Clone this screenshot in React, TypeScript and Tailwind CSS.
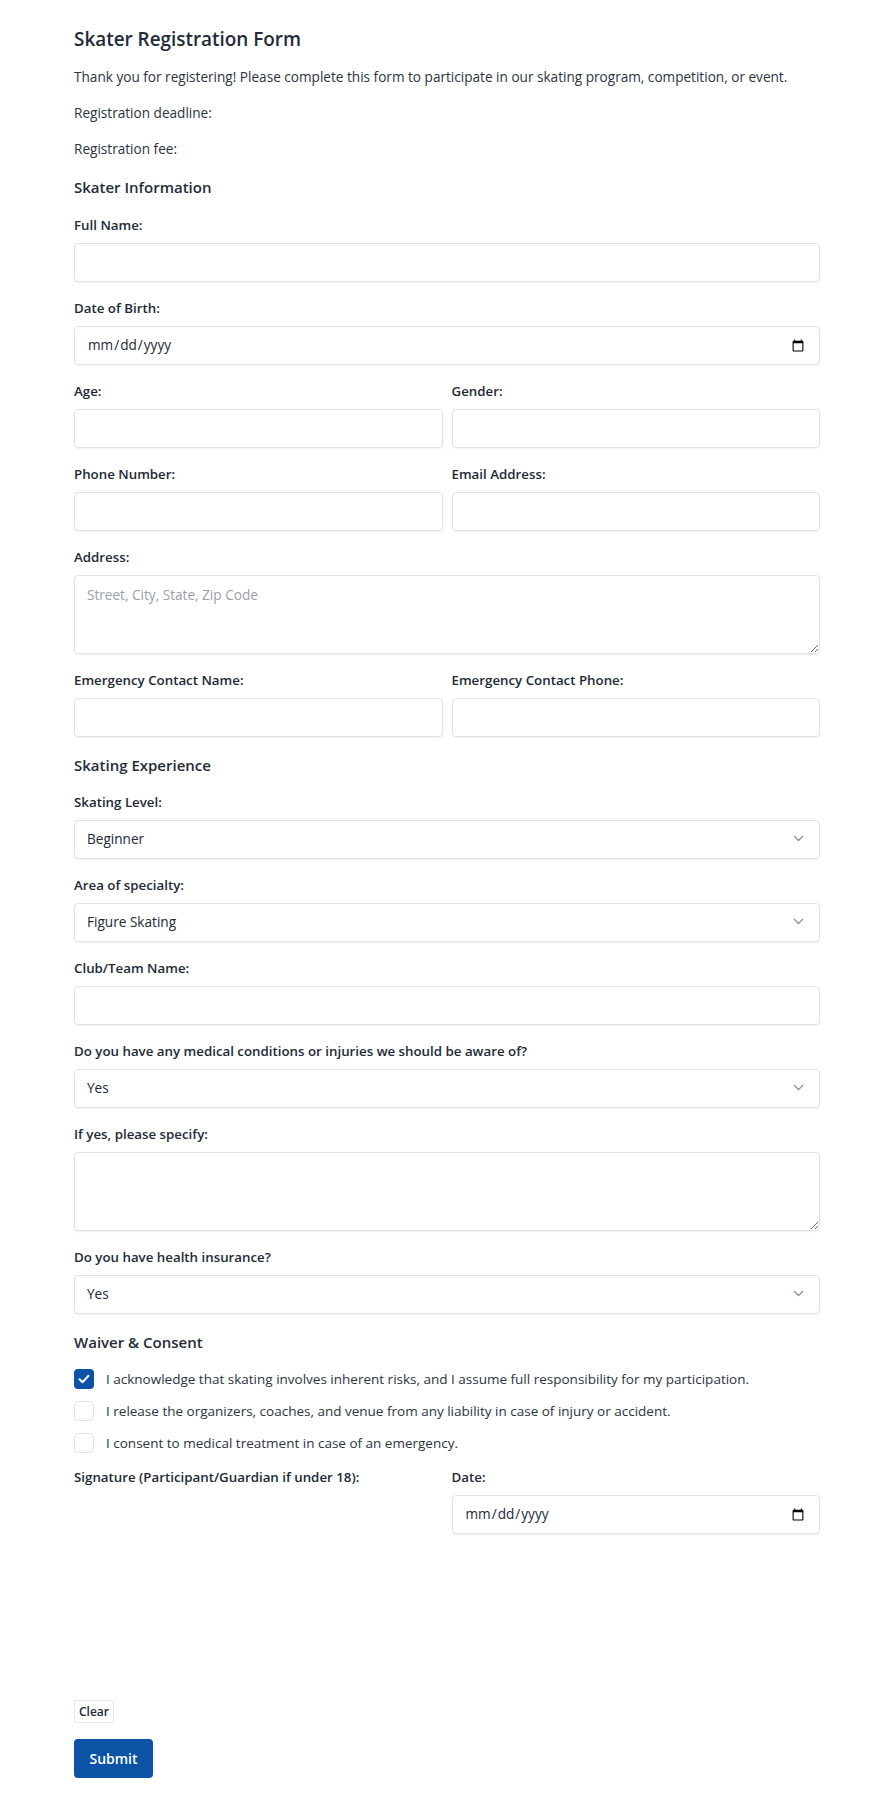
import React from 'react';

const font = { fontFamily: '"Open Sans", "Noto Sans", sans-serif' };

function Label({ children }: { children: React.ReactNode }) {
  return <label className="block text-[13.3px] leading-5 font-semibold text-[#212936] mb-2">{children}</label>;
}

const boxCls =
  'block w-full h-[39px] rounded-[4px] border border-[#dfe3e8] bg-white shadow-[0_1px_2px_rgba(0,0,0,0.06)] px-3 text-[13.6px] text-[#212936] outline-none';

function TextField({ label, type = 'text' }: { label: string; type?: string }) {
  return (
    <div className="mb-4">
      <Label>{label}</Label>
      <input type={type} className={boxCls} style={font} />
    </div>
  );
}

function SelectField({ label, value, options }: { label: string; value: string; options: string[] }) {
  return (
    <div className="mb-4">
      <Label>{label}</Label>
      <div className="relative">
        <select defaultValue={value} className={boxCls + ' appearance-none'} style={font}>
          {options.map((o) => (
            <option key={o}>{o}</option>
          ))}
        </select>
        <svg
          className="absolute right-[16px] top-[15px] pointer-events-none"
          width="11"
          height="7"
          viewBox="0 0 11 7"
          fill="none"
        >
          <path d="M1 1l4.5 4.5L10 1" stroke="#8a9099" strokeWidth="1.3" />
        </svg>
      </div>
    </div>
  );
}

function AreaField({ label, placeholder }: { label: string; placeholder?: string }) {
  return (
    <div className="mb-4">
      <Label>{label}</Label>
      <textarea
        placeholder={placeholder}
        className="block w-full h-[79px] rounded-[4px] border border-[#dfe3e8] bg-white shadow-[0_1px_2px_rgba(0,0,0,0.06)] px-3 py-[9px] text-[13.6px] text-[#212936] placeholder:text-[#9aa0a8] outline-none"
        style={font}
      />
    </div>
  );
}

function Check({ checked, children }: { checked?: boolean; children: React.ReactNode }) {
  return (
    <div className="flex items-center gap-3 h-5">
      {checked ? (
        <span className="w-5 h-5 rounded-[4px] bg-[#0c52a5] flex items-center justify-center">
          <svg width="12" height="10" viewBox="0 0 12 10" fill="none">
            <path d="M1.5 5.2l3 3L10.5 1.8" stroke="white" strokeWidth="2" strokeLinecap="round" strokeLinejoin="round" />
          </svg>
        </span>
      ) : (
        <span className="w-5 h-5 rounded-[4px] border border-[#dfe3e8] bg-white" />
      )}
      <span className="text-[13.5px] text-[#2b3340]">{children}</span>
    </div>
  );
}

export default function App() {
  return (
    <div className="bg-white min-h-[1799px] text-[#212936]" style={font}>
      <form className="ml-[74px] w-[746px] pt-[25px] pb-5" onSubmit={(e) => e.preventDefault()}>
        <h1 className="text-[18.9px] leading-7 font-semibold text-[#232b38] mb-[14px]">Skater Registration Form</h1>
        <p className="text-[13.6px] leading-5 text-[#2b3340] mb-4">
          Thank you for registering! Please complete this form to participate in our skating program, competition, or event.
        </p>
        <p className="text-[13.6px] leading-5 text-[#2b3340] mb-4">Registration deadline:</p>
        <p className="text-[13.6px] leading-5 text-[#2b3340] mb-[16px]">Registration fee:</p>

        <h2 className="text-[15px] leading-6 font-semibold text-[#232b38] mb-4">Skater Information</h2>
        <TextField label="Full Name:" />
        <TextField label="Date of Birth:" type="date" />
        <div className="grid grid-cols-2 gap-x-[9px]">
          <TextField label="Age:" />
          <TextField label="Gender:" />
          <TextField label="Phone Number:" />
          <TextField label="Email Address:" />
        </div>
        <AreaField label="Address:" placeholder="Street, City, State, Zip Code" />
        <div className="grid grid-cols-2 gap-x-[9px]">
          <TextField label="Emergency Contact Name:" />
          <TextField label="Emergency Contact Phone:" />
        </div>

        <h2 className="text-[15px] leading-6 font-semibold text-[#232b38] mb-[15px]">Skating Experience</h2>
        <SelectField label="Skating Level:" value="Beginner" options={['Beginner', 'Intermediate', 'Advanced']} />
        <SelectField
          label="Area of specialty:"
          value="Figure Skating"
          options={['Figure Skating', 'Speed Skating', 'Ice Dance', 'Hockey']}
        />
        <TextField label="Club/Team Name:" />
        <SelectField
          label="Do you have any medical conditions or injuries we should be aware of?"
          value="Yes"
          options={['Yes', 'No']}
        />
        <AreaField label="If yes, please specify:" />
        <SelectField label="Do you have health insurance?" value="Yes" options={['Yes', 'No']} />

        <h2 className="text-[15px] leading-6 font-semibold text-[#232b38] mb-[15px]">Waiver &amp; Consent</h2>
        <div className="flex flex-col gap-3 mb-[14px]">
          <Check checked>
            I acknowledge that skating involves inherent risks, and I assume full responsibility for my participation.
          </Check>
          <Check>I release the organizers, coaches, and venue from any liability in case of injury or accident.</Check>
          <Check>I consent to medical treatment in case of an emergency.</Check>
        </div>

        <div className="grid grid-cols-2 gap-x-[9px]">
          <div>
            <Label>Signature (Participant/Guardian if under 18):</Label>
            <div className="h-[197px]" />
          </div>
          <div>
            <Label>Date:</Label>
            <input type="date" className={boxCls} style={font} />
          </div>
        </div>

        <button
          type="button"
          className="mt-2 block h-[23px] px-[4px] border border-[#e3e6ea] bg-white text-[12px] font-semibold text-[#212936] rounded-[2px]"
        >
          Clear
        </button>
        <button
          type="submit"
          className="mt-4 block h-[39px] w-[79px] rounded-[4px] bg-[#0c52a5] text-white text-[14px] font-semibold"
        >
          Submit
        </button>
      </form>
    </div>
  );
}
